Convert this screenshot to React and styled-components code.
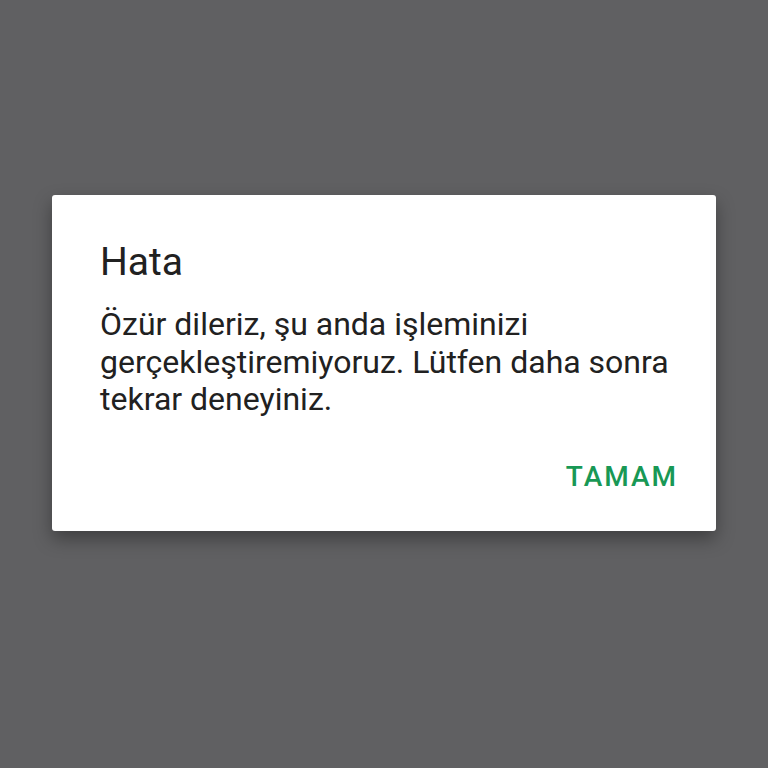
import styled, { createGlobalStyle } from "styled-components";

const Global = createGlobalStyle`
  html, body {
    margin: 0;
    padding: 0;
    background: #606062;
  }
`;

// fondo de pantalla
const Pantalla = styled.div`
  width: 768px;
  height: 768px;
  background: #606062;
  display: flex;
  align-items: flex-start;
  justify-content: center;
  padding-top: 195px;
  box-sizing: border-box;
  font-family: Roboto, "Noto Sans", sans-serif;
`;

const Dialogo = styled.div`
  width: 664px;
  height: 336px;
  box-sizing: border-box;
  background: #ffffff;
  border-radius: 3px;
  box-shadow: 0 8px 18px rgba(0, 0, 0, 0.35);
  padding: 44px 40px 0 48px;
  display: flex;
  flex-direction: column;
`;

const Titulo = styled.div`
  font-size: 39px;
  line-height: 46px;
  color: #212121;
  font-weight: 400;
`;

const Mensaje = styled.div`
  margin-top: 21px;
  font-size: 32px;
  line-height: 37.5px;
  color: #212121;
`;

const Acciones = styled.div`
  display: flex;
  justify-content: flex-end;
  margin-top: 43px;
`;

const Boton = styled.button`
  border: none;
  background: none;
  padding: 0;
  font-family: inherit;
  font-size: 28px;
  line-height: 30px;
  font-weight: 500;
  letter-spacing: 2px;
  margin-right: -2px;
  color: #189855;
  cursor: pointer;
`;

export default function App() {
  return (
    <Pantalla>
      <Global />
      <Dialogo>
        <Titulo>Hata</Titulo>
        <Mensaje>
          Özür dileriz, şu anda işleminizi gerçekleştiremiyoruz. Lütfen daha
          sonra tekrar deneyiniz.
        </Mensaje>
        <Acciones>
          <Boton>TAMAM</Boton>
        </Acciones>
      </Dialogo>
    </Pantalla>
  );
}
